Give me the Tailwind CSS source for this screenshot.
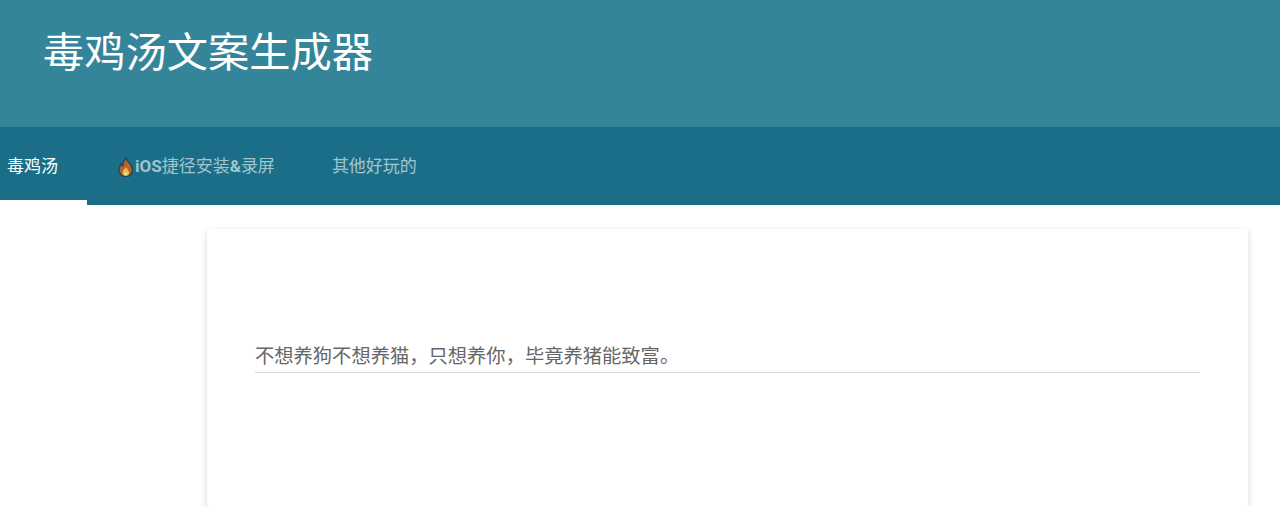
<!DOCTYPE html>
<html lang="zh">
<head>
    <meta charset="UTF-8">
    <title>毒鸡汤文案生成器</title>
    <script src="https://cdn.jsdelivr.net/npm/@tailwindcss/browser@4"></script>
</head>
<body class="bg-white overflow-hidden h-[507px] flex flex-col font-['Roboto','Noto_Sans_CJK_SC',sans-serif]">
    <!-- Header -->
    <header class="h-[127px] shrink-0 bg-[#348599] pl-[43px] pt-[25px]">
        <h1 class="text-[41.25px] leading-[56px] text-white">毒鸡汤文案生成器</h1>
    </header>

    <!-- Tabs -->
    <nav class="h-[78px] shrink-0 bg-[#1a6e87] flex text-[17px]">
        <a class="w-[87px] h-[78px] flex items-center pl-[7px] text-white border-b-[5px] border-white pt-[6px]">毒鸡汤</a>
        <a class="ml-[30px] h-[78px] flex items-center pt-[1px] text-white/60">
            <svg class="w-[18px] h-[20px]" viewBox="0 0 18 20"><path d="M9 .8C9.500 3 10.500 3.800 12 5.500C14.500 8 15.500 10.500 15.500 13A6.500 6.500 0 0 1 2 13C2 10.500 3 8.500 4.500 7C5 8 5.500 8.500 6 8.500C6 5.500 7 3 9 .8Z" fill="#b5622c" stroke="#1d4a58" stroke-width="1.300"/><path d="M8.800 10C9.500 11.500 12 12.800 12 15.500A3.200 3.200 0 0 1 5.600 15.500C5.600 13 8 12 8.800 10Z" fill="#e9b949"/><path d="M8.800 14C9.300 15 10.400 15.500 10.400 16.700A1.600 1.600 0 0 1 7.200 16.700C7.200 15.500 8.400 15 8.800 14Z" fill="#dfe28a"/></svg>
            <span class="font-bold">iOS</span>捷径安装<span class="font-bold">&amp;</span>录屏
        </a>
        <a class="ml-[57px] h-[78px] flex items-center pt-[1px] text-white/60">其他好玩的</a>
    </nav>

    <!-- Card -->
    <main class="flex-1 ml-[207px] mr-[32px] mt-[24px] bg-white rounded-[2px] shadow-[0_2px_6px_rgba(0,0,0,0.16)] px-[48px] pt-[110px]">
        <div class="border-b border-[#d9d9d9] h-[34px] text-[19.3px] leading-[36px] text-[#666]">不想养狗不想养猫，只想养你，毕竟养猪能致富。</div>
    </main>
</body>
</html>
